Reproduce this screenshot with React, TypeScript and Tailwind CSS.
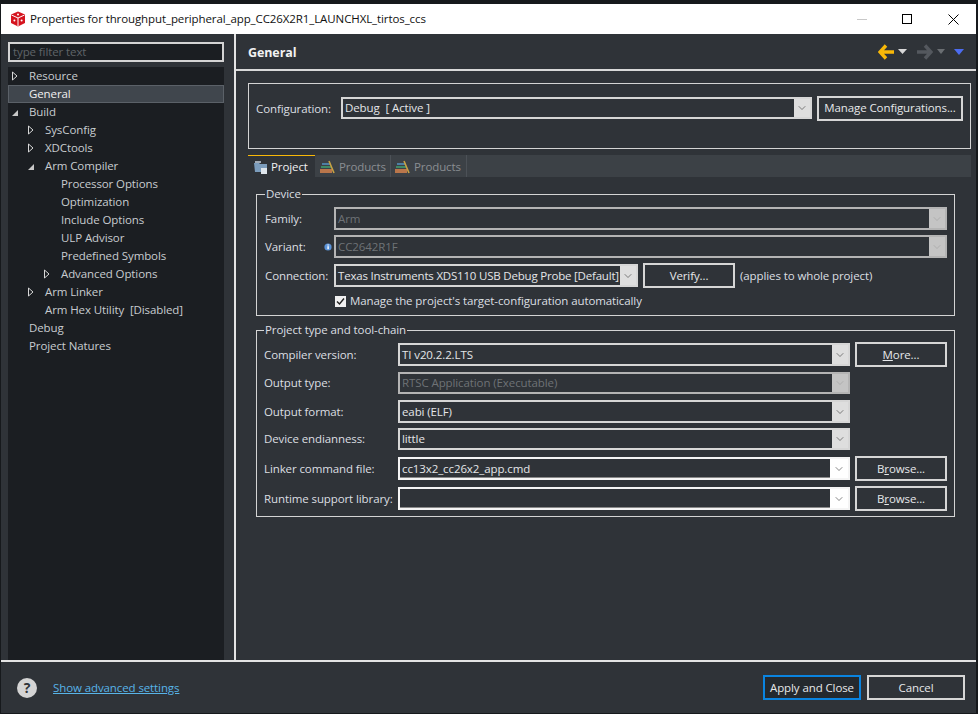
import { ChevronDown } from "lucide-react";

const font = { fontFamily: '"Open Sans", "Noto Sans", sans-serif' };

const Caret = ({ open }: { open?: boolean }) =>
    open ? (
        <svg width="8" height="9" viewBox="0 0 8 9" className="shrink-0">
            <path d="M6 2V8H0Z" fill="#c8c8c8" />
        </svg>
    ) : (
        <svg width="7" height="10" viewBox="0 0 7 10" className="shrink-0">
            <path d="M0.5 1V9L5 5Z" fill="none" stroke="#d8d8d8" />
        </svg>
    );

const tree: { label: string; depth: number; kind?: "open" | "closed"; selected?: boolean }[] = [
    { label: "Resource", depth: 0, kind: "closed" },
    { label: "General", depth: 0, selected: true },
    { label: "Build", depth: 0, kind: "open" },
    { label: "SysConfig", depth: 1, kind: "closed" },
    { label: "XDCtools", depth: 1, kind: "closed" },
    { label: "Arm Compiler", depth: 1, kind: "open" },
    { label: "Processor Options", depth: 2 },
    { label: "Optimization", depth: 2 },
    { label: "Include Options", depth: 2 },
    { label: "ULP Advisor", depth: 2 },
    { label: "Predefined Symbols", depth: 2 },
    { label: "Advanced Options", depth: 2, kind: "closed" },
    { label: "Arm Linker", depth: 1, kind: "closed" },
    { label: "Arm Hex Utility  [Disabled]", depth: 1 },
    { label: "Debug", depth: 0 },
    { label: "Project Natures", depth: 0 },
];

const TreeRow = ({ label, depth, kind, selected }: (typeof tree)[number]) => (
    <div className={`flex h-[18px] items-center border ${selected ? "border-[#5b6168] bg-[#40464d] text-[#f0f0f0]" : "border-transparent text-[#c8ccd0]"}`}>
        <div className={`flex w-[20px] pl-[3px] ${depth === 0 ? "ml-0" : depth === 1 ? "ml-[16px]" : "ml-[32px]"}`}>
            {kind && <Caret open={kind === "open"} />}
        </div>
        <span className="whitespace-pre">{label}</span>
    </div>
);

type ComboState = "normal" | "disabled" | "white";

const Combo = ({ value, w, h = "h-[23px]", state = "normal", tight }: { value: string; w: string; h?: string; state?: ComboState; tight?: boolean }) => (
    <div className={`flex ${w} ${h} shrink-0 border-2 ${state === "disabled" ? "border-[#b4b4b4]" : state === "white" ? "border-[#f4f4f4] shadow-[inset_-1px_-1px_0_#8a8a8a]" : "border-[#d6d6d6]"}`}>
        <div className={`flex min-w-0 flex-1 items-center overflow-hidden whitespace-pre pl-[2px] ${tight ? "tracking-[-0.2px]" : ""} ${state === "disabled" ? "text-[#6e7276]" : "text-[#e4e6e8]"}`}>{value}</div>
        <div className={`flex items-center justify-center ${state === "disabled" ? "w-[16px] bg-[#c4c4c4]" : state === "white" ? "w-[18px] bg-white" : "w-[16px] bg-[#dedede]"}`}>
            <ChevronDown size={12} strokeWidth={1.3} className={state === "disabled" ? "text-[#a2a2a2]" : "text-[#444]"} />
        </div>
    </div>
);

const Btn = ({ w, blue, children }: { w: string; blue?: boolean; children: React.ReactNode }) => (
    <button className={`flex ${w} h-[25px] shrink-0 items-center justify-center whitespace-pre border-2 text-[#e6e8ea] ${blue ? "border-[#0a84e0] bg-[#24292e]" : "border-[#d6d6d6]"}`}>
        {children}
    </button>
);

const Books = () => (
    <svg width="16" height="14" viewBox="0 0 16 14" className="shrink-0">
        <rect x="2" y="3" width="8" height="2" fill="#4d7fa3" />
        <rect x="1" y="6" width="10" height="2" fill="#3f8a66" />
        <rect x="0" y="9" width="12" height="4" fill="#b9764b" />
        <path d="M9 1L14 13" stroke="#c8a243" strokeWidth="1.6" />
    </svg>
);

const ProjectRow = ({ label, value, state, button, h = "h-[23px]", mt }: { label: string; value: string; state?: ComboState; button?: React.ReactNode; h?: string; mt: string }) => (
    <div className={`flex ${h} ${mt} items-center`}>
        <div className="w-[134px] whitespace-nowrap text-[#dcdfe2]">{label}</div>
        <Combo value={value} w="w-[452px]" state={state} h={h} />
        {button && <div className="ml-[5px]">{button}</div>}
    </div>
);

export default function App() {
    return (
        <div className="flex h-[714px] w-[978px] flex-col overflow-hidden bg-[#16191c] pt-[4px] text-[11.5px] leading-[16px] tracking-[-0.1px]" style={font}>
            {/* title bar */}
            <div className="ml-[1px] mr-[2px] flex h-[30px] shrink-0 items-center bg-white pl-[9px] text-[#111]">
                <svg width="16" height="16" viewBox="0 0 16 16" className="shrink-0">
                    <path d="M8 0.5L15 3.5V12L8 15.5L1 12V3.5Z" fill="#d5141f" />
                    <path d="M1.5 4L8 7L14.5 4M8 7V15" stroke="#fff" strokeWidth="1" fill="none" />
                    <circle cx="8" cy="3.6" r="1" fill="#fff" />
                    <circle cx="4.4" cy="9.5" r="1" fill="#fff" />
                    <circle cx="11.6" cy="9.5" r="1" fill="#fff" />
                </svg>
                <span className="ml-[4px] flex-1 whitespace-nowrap">Properties for throughput_peripheral_app_CC26X2R1_LAUNCHXL_tirtos_ccs</span>
                <div className="h-px w-[10px] bg-[#c8c8c8]" />
                <div className="ml-[35px] h-[10px] w-[10px] border border-black" />
                <svg width="11" height="11" viewBox="0 0 11 11" className="ml-[36px] mr-[17px]">
                    <path d="M0.5 0.5L10.5 10.5M10.5 0.5L0.5 10.5" stroke="#000" strokeWidth="1" />
                </svg>
            </div>

            <div className="mb-[1px] ml-[1px] mr-[2px] flex min-h-0 flex-1 flex-col bg-[#2f3338]">
                <div className="flex h-[628px] shrink-0 border-b-2 border-[#e4e4e4]">
                    {/* left tree */}
                    <div className="flex w-[233px] shrink-0 flex-col pl-[7px] pt-[8px]">
                        <div className="flex h-[20px] w-[216px] items-center border-2 border-[#d4d4d4] bg-[#1b1e22] pl-[3px] text-[#5f6468]">type filter text</div>
                        <div className="mt-[5px] w-[216px] flex-1 bg-[#1b1e22]">
                            {tree.map((row) => (
                                <TreeRow key={row.label} {...row} />
                            ))}
                        </div>
                    </div>

                    {/* right page */}
                    <div className="flex min-w-0 flex-1 flex-col border-l-2 border-[#e4e4e4]">
                        <div className="flex h-[37px] shrink-0 items-center justify-between border-b-2 border-[#d8d8d8] pl-[12px] pr-[12px]">
                            <span className="pt-[3px] text-[12.5px] font-bold text-[#f2f2f2]">General</span>
                            <div className="flex items-center">
                                <svg width="17" height="16" viewBox="0 0 17 16"><path d="M8 1.5L2 8L8 14.5M3 8H16" fill="none" stroke="#f8b808" strokeWidth="3.4" /></svg>
                                <svg width="9" height="5" viewBox="0 0 9 5" className="ml-[3px]"><path d="M0 0H9L4.5 5Z" fill="#d8d8d8" /></svg>
                                <svg width="17" height="16" viewBox="0 0 17 16" className="ml-[9px]"><path d="M9 1.5L15 8L9 14.5M14 8H1" fill="none" stroke="#54585e" strokeWidth="3.4" /></svg>
                                <svg width="8" height="5" viewBox="0 0 8 5" className="ml-[4px]"><path d="M0 0H8L4 5Z" fill="#6a6e72" /></svg>
                                <svg width="10" height="6" viewBox="0 0 10 6" className="ml-[9px]"><path d="M0 0H10L5 6Z" fill="#4c6cf0" /></svg>
                            </div>
                        </div>

                        <div className="flex flex-1 flex-col pl-[12px] pr-[5px] pt-[12px]">
                            {/* configuration */}
                            <div className="h-[66px] border border-[#d4d4d4] pl-[7px] pt-[13px]">
                                <div className="flex h-[22px] items-center">
                                    <span className="w-[85px] pt-[1px] text-[#dcdfe2]">Configuration:</span>
                                    <Combo value="Debug  [ Active ]" w="w-[471px]" h="h-[22px]" />
                                    <div className="ml-[5px]">
                                        <Btn w="w-[146px]">Manage Configurations...</Btn>
                                    </div>
                                </div>
                            </div>

                            {/* tabs */}
                            <div className="mt-[6px] flex h-[22px] items-stretch bg-[#3c4146]">
                                <div className="flex w-[67px] items-center gap-[3px] border-t border-[#f8b808] bg-[#2f3338] pl-[5px] pt-[1px] text-[#f0f0f0]">
                                    <svg width="15" height="14" viewBox="0 0 15 14" className="shrink-0">
                                        <path d="M1 3H6L7 4H14V12H2Z" fill="#7c9dbd" />
                                        <path d="M2 2H8" stroke="#c8d4e0" strokeWidth="1.5" />
                                        <rect x="8" y="8" width="6" height="6" fill="#dfe6ec" />
                                    </svg>
                                    Project
                                </div>
                                <div className="flex w-[76px] items-center gap-[3px] border-r border-[#4c5157] pl-[5px] pt-[1px] text-[#8a8e92]">
                                    <Books />
                                    Products
                                </div>
                                <div className="flex w-[76px] items-center gap-[3px] border-r border-[#4c5157] pl-[4px] pt-[1px] text-[#8a8e92]">
                                    <Books />
                                    Products
                                </div>
                            </div>

                            <div className="flex flex-col pl-[8px] pr-[16px]">
                                {/* device */}
                                <fieldset className="mt-[9px] h-[130px] border border-[#d4d4d4] pl-[8px]">
                                    <legend className="px-[1px] text-[#dcdfe2]">Device</legend>
                                    <div className="flex flex-col pt-[5px]">
                                        <div className="flex h-[23px] items-center">
                                            <span className="w-[69px] text-[#dcdfe2]">Family:</span>
                                            <Combo value="Arm" w="w-[613px]" state="disabled" />
                                        </div>
                                        <div className="mt-[5px] flex h-[23px] items-center">
                                            <span className="w-[59px] text-[#dcdfe2]">Variant:</span>
                                            <svg width="8" height="8" viewBox="0 0 8 8" className="mr-[2px]"><circle cx="4" cy="4" r="3.6" fill="#5b93d8" /><rect x="3.4" y="3.2" width="1.4" height="3" fill="#fff" /><rect x="3.4" y="1.5" width="1.4" height="1" fill="#fff" /></svg>
                                            <Combo value="CC2642R1F" w="w-[613px]" state="disabled" />
                                        </div>
                                        <div className="mt-[6px] flex h-[23px] items-center">
                                            <span className="w-[69px] text-[#dcdfe2]">Connection:</span>
                                            <Combo value="Texas Instruments XDS110 USB Debug Probe [Default]" w="w-[304px]" tight />
                                            <div className="ml-[5px]"><Btn w="w-[92px]">Verify...</Btn></div>
                                            <span className="ml-[5px] whitespace-nowrap text-[#dcdfe2]">(applies to whole project)</span>
                                        </div>
                                        <div className="ml-[70px] mt-[6px] flex h-[16px] items-center gap-[4px] text-[#dcdfe2]">
                                            <svg width="11" height="11" viewBox="0 0 11 11" className="shrink-0">
                                                <rect width="11" height="11" fill="#f0f0f0" />
                                                <path d="M2 5.5L4.5 8L9 2.5" fill="none" stroke="#222" strokeWidth="1.4" />
                                            </svg>
                                            Manage the project's target-configuration automatically
                                        </div>
                                    </div>
                                </fieldset>

                                {/* toolchain */}
                                <fieldset className="mt-[6px] h-[195px] border border-[#d4d4d4] pl-[7px]">
                                    <legend className="px-[1px] text-[#dcdfe2]">Project type and tool-chain</legend>
                                    <div className="flex flex-col pt-[5px]">
                                        <ProjectRow mt="mt-0" label="Compiler version:" value="TI v20.2.2.LTS" button={<Btn w="w-[92px]"><span><u>M</u>ore...</span></Btn>} />
                                        <ProjectRow mt="mt-[6px]" h="h-[22px]" label="Output type:" value="RTSC Application (Executable)" state="disabled" />
                                        <ProjectRow mt="mt-[6px]" label="Output format:" value="eabi (ELF)" />
                                        <ProjectRow mt="mt-[5px]" h="h-[22px]" label="Device endianness:" value="little" />
                                        <ProjectRow mt="mt-[7px]" label="Linker command file:" value="cc13x2_cc26x2_app.cmd" state="white" button={<Btn w="w-[92px]"><span>B<u>r</u>owse...</span></Btn>} />
                                        <ProjectRow mt="mt-[7px]" label="Runtime support library:" value="" state="white" button={<Btn w="w-[92px]"><span>B<u>r</u>owse...</span></Btn>} />
                                    </div>
                                </fieldset>
                            </div>
                        </div>
                    </div>
                </div>

                {/* footer */}
                <div className="flex flex-1 items-center justify-between pl-[16px] pr-[11px]">
                    <div className="flex items-center gap-[16px]">
                        <div className="flex h-[20px] w-[20px] items-center justify-center rounded-full bg-[#d4d4d4] text-[14px] font-bold text-[#2f3338]">?</div>
                        <a className="text-[#58b4e8] underline">Show advanced settings</a>
                    </div>
                    <div className="flex gap-[6px]">
                        <Btn w="w-[98px]" blue>Apply and Close</Btn>
                        <Btn w="w-[98px]">Cancel</Btn>
                    </div>
                </div>
            </div>
        </div>
    );
}
